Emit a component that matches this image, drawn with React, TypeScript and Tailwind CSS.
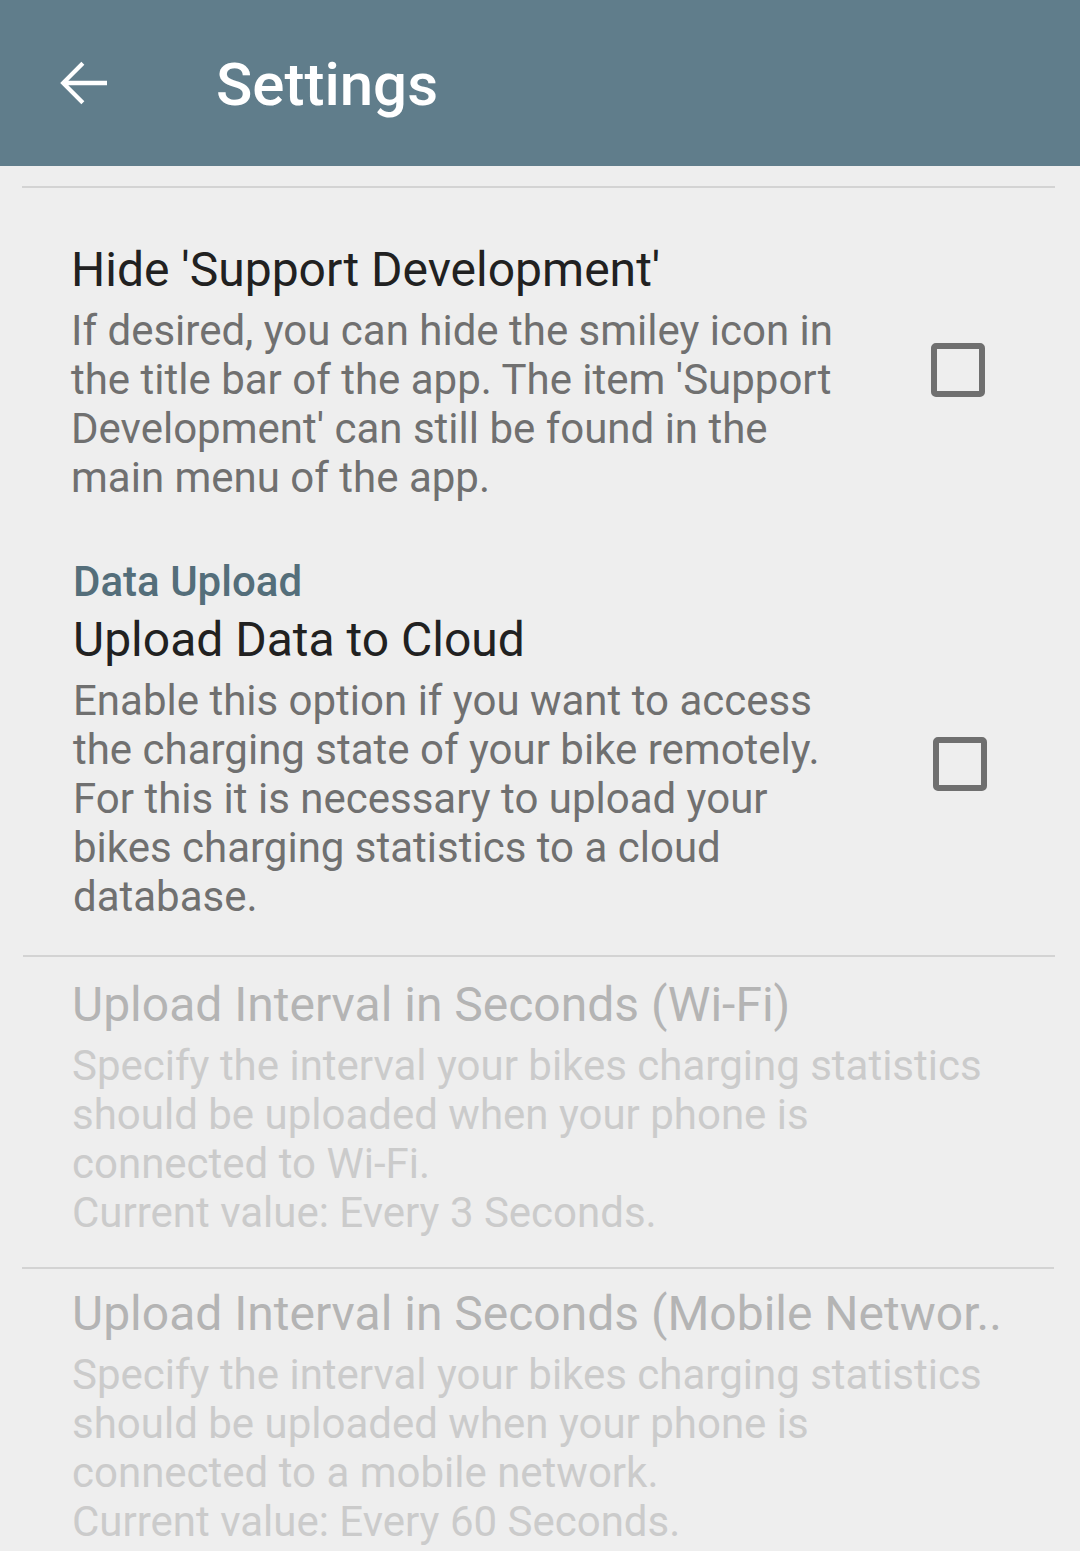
import React from "react";

function Checkbox() {
  return (
    <div className="w-[54px] h-[54px] border-[6px] border-[#6f6f6f] rounded-[5px] shrink-0" />
  );
}

function Desc({ lines, color }: { lines: string[]; color: string }) {
  return (
    <div className={`mt-[8px] text-[42px] leading-[49px] ${color}`}>
      {lines.map((l, i) => (
        <div key={i} className="whitespace-nowrap">
          {l}
        </div>
      ))}
    </div>
  );
}

export default function App() {
  return (
    <div
      className="w-[1080px] h-[1551px] overflow-hidden bg-[#eeeeee]"
      style={{ fontFamily: "Roboto, 'Noto Sans', sans-serif" }}
    >
      {/* App bar */}
      <div className="h-[166px] bg-[#607d8b] flex items-center">
        <svg
          className="ml-[47px] w-[72px] h-[72px]"
          viewBox="0 0 24 24"
          fill="#ffffff"
        >
          <path d="M20 11.25H7.1l5.35-5.35-1-1L4.4 12l7.05 7.1 1-1-5.35-5.35H20z" />
        </svg>
        <div className="ml-[97px] text-white text-[60px] font-medium leading-none pt-[4px]">
          Settings
        </div>
      </div>

      <div className="h-[20px]" />
      <div className="ml-[22px] mr-[25px] h-[2px] bg-[#d3d3d3]" />

      {/* Item 1 */}
      <div className="flex items-center pl-[71px] pt-[54px]">
        <div className="flex-1">
          <div className="text-[48px] leading-[56px] text-[#212121] whitespace-nowrap">
            Hide 'Support Development'
          </div>
          <Desc
            color="text-[#707070]"
            lines={[
              "If desired, you can hide the smiley icon in",
              "the title bar of the app. The item 'Support",
              "Development' can still be found in the",
              "main menu of the app.",
            ]}
          />
        </div>
        <div className="w-[149px] flex items-center pb-[4px]">
          <Checkbox />
        </div>
      </div>

      {/* Category */}
      <div className="pl-[73px] mt-[55px] text-[42px] leading-[50px] font-medium text-[#546e7a]">
        Data Upload
      </div>

      {/* Item 2 */}
      <div className="flex items-center pl-[73px] pt-[5px]">
        <div className="flex-1">
          <div className="text-[48px] leading-[56px] text-[#212121] whitespace-nowrap">
            Upload Data to Cloud
          </div>
          <Desc
            color="text-[#707070]"
            lines={[
              "Enable this option if you want to access",
              "the charging state of your bike remotely.",
              "For this it is necessary to upload your",
              "bikes charging statistics to a cloud",
              "database.",
            ]}
          />
        </div>
        <div className="w-[147px] flex items-center pb-[6px]">
          <Checkbox />
        </div>
      </div>

      <div className="h-[34px]" />
      <div className="ml-[23px] mr-[25px] h-[2px] bg-[#d3d3d3]" />

      {/* Item 3 */}
      <div className="pl-[72px] pt-[20px]">
        <div className="text-[48px] leading-[56px] text-[#b4b4b4] whitespace-nowrap">
          Upload Interval in Seconds (Wi-Fi)
        </div>
        <Desc
          color="text-[#cbcbcb]"
          lines={[
            "Specify the interval your bikes charging statistics",
            "should be uploaded when your phone is",
            "connected to Wi-Fi.",
            "Current value: Every 3 Seconds.",
          ]}
        />
      </div>

      <div className="h-[30px]" />
      <div className="ml-[22px] mr-[26px] h-[2px] bg-[#d3d3d3]" />

      {/* Item 4 */}
      <div className="pl-[72px] pt-[17px]">
        <div className="text-[48px] leading-[56px] text-[#b4b4b4] whitespace-nowrap">
          Upload Interval in Seconds (Mobile Networ..
        </div>
        <Desc
          color="text-[#cbcbcb]"
          lines={[
            "Specify the interval your bikes charging statistics",
            "should be uploaded when your phone is",
            "connected to a mobile network.",
            "Current value: Every 60 Seconds.",
          ]}
        />
      </div>
    </div>
  );
}
